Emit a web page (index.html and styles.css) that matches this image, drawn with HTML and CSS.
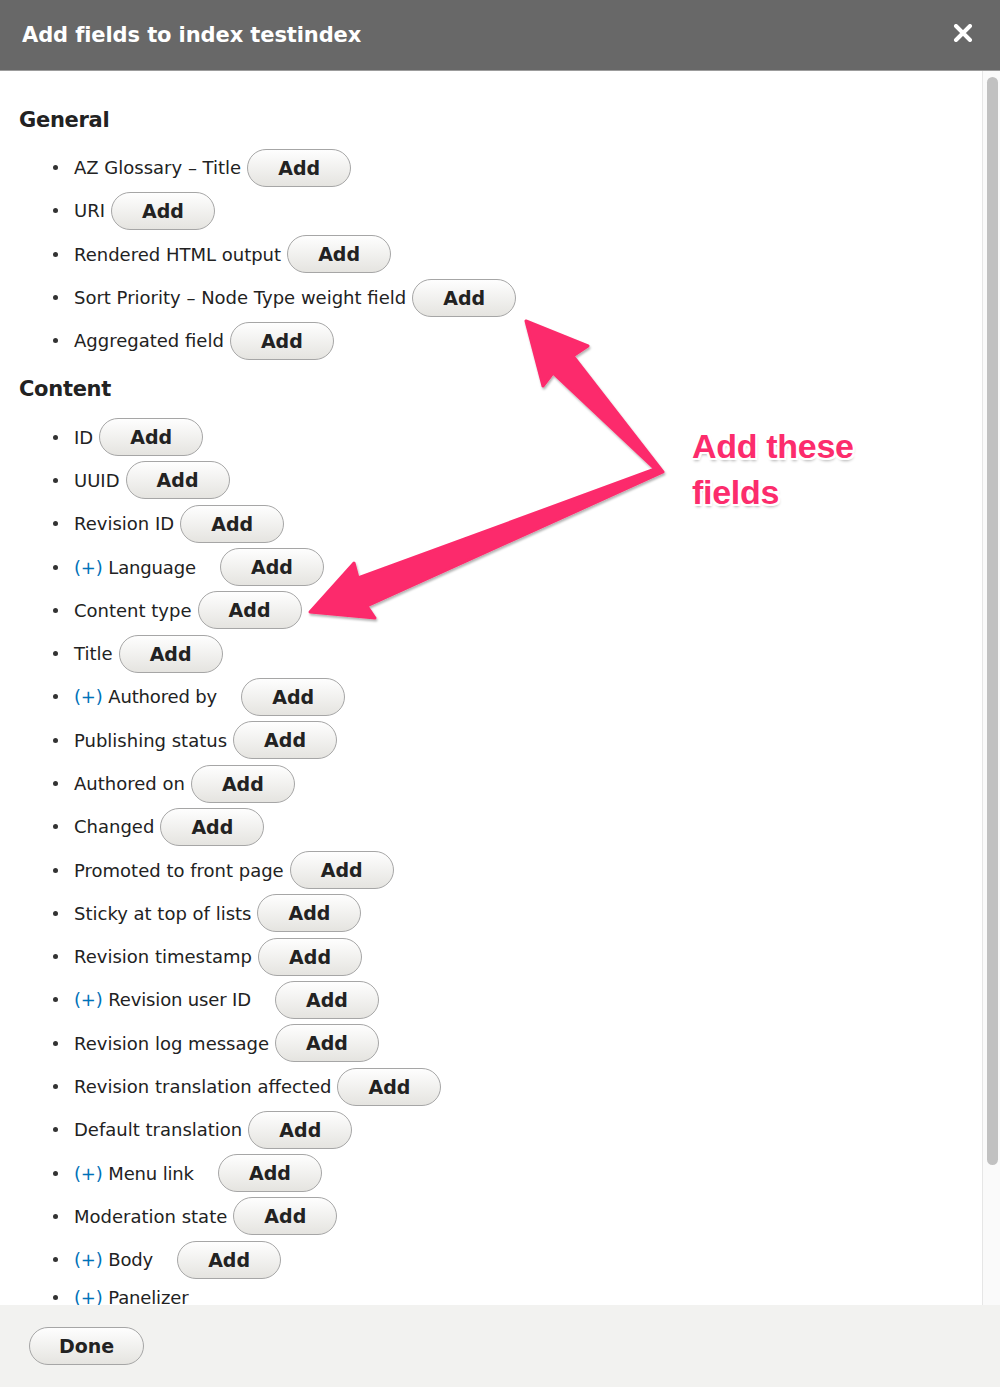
FILE: index.html
```html
<!DOCTYPE html>
<html lang="en">
<head>
<meta charset="utf-8">
<title>Add fields to index testindex</title>
<link rel="stylesheet" href="styles.css">
</head>
<body>
<div class="dialog">
  <header class="titlebar">
    <h1 class="title">Add fields to index testindex</h1>
    <svg class="close" width="20" height="18" viewBox="0 0 20 18" aria-label="Close">
      <path d="M3 2 L17 16 M17 2 L3 16" stroke="#fff" stroke-width="4" stroke-linecap="round"/>
    </svg>
  </header>
  <div class="main">
    <div class="content">
      <h2 class="section">General</h2>
      <ul class="fields">
        <li><span class="label">AZ Glossary – Title</span><button class="btn">Add</button></li>
        <li><span class="label">URI</span><button class="btn">Add</button></li>
        <li><span class="label">Rendered HTML output</span><button class="btn">Add</button></li>
        <li><span class="label">Sort Priority – Node Type weight field</span><button class="btn">Add</button></li>
        <li><span class="label">Aggregated field</span><button class="btn">Add</button></li>
      </ul>
      <h2 class="section">Content</h2>
      <ul class="fields">
        <li><span class="label">ID</span><button class="btn">Add</button></li>
        <li><span class="label">UUID</span><button class="btn">Add</button></li>
        <li><span class="label">Revision ID</span><button class="btn">Add</button></li>
        <li class="expand"><span class="label"><span class="plus">(+)</span> Language</span><button class="btn">Add</button></li>
        <li><span class="label">Content type</span><button class="btn">Add</button></li>
        <li><span class="label">Title</span><button class="btn">Add</button></li>
        <li class="expand"><span class="label"><span class="plus">(+)</span> Authored by</span><button class="btn">Add</button></li>
        <li><span class="label">Publishing status</span><button class="btn">Add</button></li>
        <li><span class="label">Authored on</span><button class="btn">Add</button></li>
        <li><span class="label">Changed</span><button class="btn">Add</button></li>
        <li><span class="label">Promoted to front page</span><button class="btn">Add</button></li>
        <li><span class="label">Sticky at top of lists</span><button class="btn">Add</button></li>
        <li><span class="label">Revision timestamp</span><button class="btn">Add</button></li>
        <li class="expand"><span class="label"><span class="plus">(+)</span> Revision user ID</span><button class="btn">Add</button></li>
        <li><span class="label">Revision log message</span><button class="btn">Add</button></li>
        <li><span class="label">Revision translation affected</span><button class="btn">Add</button></li>
        <li><span class="label">Default translation</span><button class="btn">Add</button></li>
        <li class="expand"><span class="label"><span class="plus">(+)</span> Menu link</span><button class="btn">Add</button></li>
        <li><span class="label">Moderation state</span><button class="btn">Add</button></li>
        <li class="expand"><span class="label"><span class="plus">(+)</span> Body</span><button class="btn">Add</button></li>
        <li class="expand nobtn"><span class="label"><span class="plus">(+)</span> Panelizer</span></li>
      </ul>
    </div>
    <div class="scrollbar"><div class="thumb"></div></div>
  </div>
  <footer class="footer">
    <button class="btn done">Done</button>
  </footer>
</div>

<svg class="annotation" width="1000" height="1387" viewBox="0 0 1000 1387" aria-hidden="true">
  <defs>
    <filter id="shadow" x="-10%" y="-10%" width="120%" height="120%">
      <feDropShadow dx="1" dy="2" stdDeviation="1.2" flood-color="#000" flood-opacity="0.3"/>
    </filter>
  </defs>
  <polygon filter="url(#shadow)" fill="#fc2c6c" stroke="#fc2c6c" stroke-width="3" stroke-linejoin="round"
    points="526,321 588,346 573,356 663,472 367,606 375,618 310,612 354,563 358,578 655,469 553,373 543,386"/>
</svg>
<div class="callout">Add these<br>fields</div>
</body>
</html>
```

FILE: styles.css
```css
html, body {
  margin: 0;
  padding: 0;
}

body {
  width: 1000px;
  height: 1387px;
  overflow: hidden;
  position: relative;
  font-family: "DejaVu Sans", "Liberation Sans", sans-serif;
  color: #222;
  background: #fff;
}

.dialog {
  display: flex;
  flex-direction: column;
  height: 1387px;
}

.titlebar {
  flex: 0 0 auto;
  height: 70px;
  background: #686868;
  border-bottom: 1px solid #9c9c9c;
  display: flex;
  align-items: center;
  justify-content: space-between;
  padding: 0 27px 0 22px;
}

.title {
  margin: 0;
  color: #fff;
  font-size: 21px;
  font-weight: bold;
  letter-spacing: -0.1px;
  padding-bottom: 0;
}

.close {
  display: block;
  margin-top: -4px;
}

.main {
  flex: 1 1 auto;
  display: flex;
  min-height: 0;
}

.content {
  flex: 1 1 auto;
  overflow: hidden;
  padding: 37px 0 0 19px;
}

.section {
  margin: 0 0 13px;
  font-size: 21px;
  line-height: 25px;
  font-weight: bold;
  letter-spacing: -0.3px;
  color: #222;
}

.fields {
  list-style: none;
  margin: 0 0 15px;
  padding: 0;
}

.fields li {
  height: 43.3px;
  display: flex;
  align-items: center;
  font-size: 18px;
  color: #222;
}

.fields li::before {
  content: "";
  flex: 0 0 auto;
  width: 5px;
  height: 5px;
  border-radius: 50%;
  background: #333;
  margin: 0 16px 0 34px;
}

.fields li.nobtn {
  height: 33px;
}

.label {
  white-space: nowrap;
}

.plus {
  color: #0071b8;
}

.btn {
  box-sizing: border-box;
  width: 104px;
  height: 38px;
  margin-left: 6px;
  padding: 0;
  border: 1px solid #a6a6a6;
  border-radius: 20px;
  background: linear-gradient(#fefefe, #e5e4e0);
  font-family: "DejaVu Sans", "Liberation Sans", sans-serif;
  font-size: 19px;
  font-weight: bold;
  color: #222;
  flex: 0 0 auto;
}

.expand .label {
  letter-spacing: -0.15px;
}

.expand .btn {
  margin-left: 24px;
}

.scrollbar {
  flex: 0 0 auto;
  box-sizing: content-box;
  border-left: 1px solid #e6e6e6;
  background: #fafafa;
  padding: 6px 2px 0 4px;
  width: 11px;
}

.thumb {
  height: 1088px;
  border-radius: 6px;
  background: #c1c1c1;
}

.footer {
  flex: 0 0 auto;
  height: 82px;
  box-sizing: border-box;
  background: #f2f2f0;
  padding: 22px 29px;
}

.btn.done {
  width: 115px;
  margin-left: 0;
}

.annotation {
  position: absolute;
  left: 0;
  top: 0;
  pointer-events: none;
}

.callout {
  position: absolute;
  left: 692px;
  top: 423px;
  font-family: "Liberation Sans", Arial, sans-serif;
  font-weight: bold;
  font-size: 34px;
  line-height: 46px;
  color: #fc2c6c;
  letter-spacing: -0.3px;
  text-shadow:
    2px 0 0 #fff, -2px 0 0 #fff, 0 2px 0 #fff, 0 -2px 0 #fff,
    2px 2px 0 #fff, -2px -2px 0 #fff, 2px -2px 0 #fff, -2px 2px 0 #fff,
    1px 3px 3px rgba(0, 0, 0, 0.3);
}
```
